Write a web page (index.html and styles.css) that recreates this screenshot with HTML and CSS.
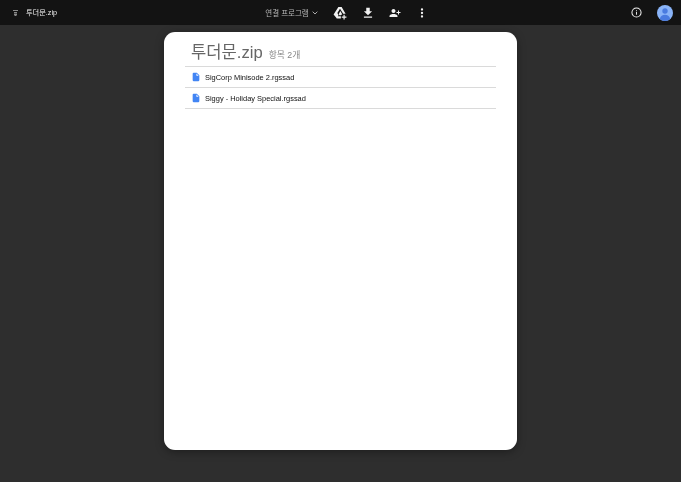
FILE: index.html
```html
<!DOCTYPE html>
<html lang="ko">
<head>
<meta charset="utf-8">
<title>투더문.zip</title>
<link rel="stylesheet" href="styles.css">
</head>
<body>
<header class="topbar">
  <div class="side left">
    <svg class="zipicon" viewBox="0 0 5 6" width="5" height="6"><path d="M0 0h5v1H0zM1 2h3v1H1zM1 3.500h3V5L3 6H2L1 5z" fill="#8a8a8a"/></svg>
    <span class="fname">투더문.zip</span>
  </div>
  <div class="center">
    <div class="openwith"><span>연결 프로그램</span>
      <svg viewBox="0 0 24 24" width="8" height="8"><path d="M5 8l7 7 7-7" fill="none" stroke="#aaa" stroke-width="3"/></svg>
    </div>
    <div class="actions">
      <svg viewBox="0 0 24 24" width="14" height="14"><path d="M9.200 1.500h5.600l6.800 11.800H17.500L12 4.500 7.500 12 9.500 15.500 6.300 21 1 14.500zM12.500 8.500l3.300 5.500-2.500 2H11l-1.200-2zM8 17.500h5.500v4H6z" fill="#f1f1f1"/><path d="M18 15v3h-3v2h3v3h2v-3h3v-2h-3v-3z" fill="#f1f1f1"/></svg>
      <svg viewBox="0 0 24 24" width="14" height="14"><path d="M19 9h-4V3H9v6H5l7 7zM5 18v2h14v-2z" fill="#f1f1f1"/></svg>
      <svg viewBox="0 0 24 24" width="12" height="12"><path d="M15 12c2.200 0 4-1.800 4-4s-1.800-4-4-4-4 1.800-4 4 1.800 4 4 4zM6 10V7H4v3H1v2h3v3h2v-3h3v-2zM15 14c-2.700 0-8 1.300-8 4v2h16v-2c0-2.700-5.300-4-8-4z" fill="#f1f1f1" transform="matrix(-1 0 0 1 24 0)"/></svg>
      <svg viewBox="0 0 24 24" width="14" height="14"><path d="M12 8a2 2 0 100-4 2 2 0 000 4zm0 2a2 2 0 100 4 2 2 0 000-4zm0 6a2 2 0 100 4 2 2 0 000-4z" fill="#f1f1f1"/></svg>
    </div>
  </div>
  <div class="side right">
    <svg viewBox="0 0 24 24" width="11" height="11"><circle cx="12" cy="12" r="10" fill="none" stroke="#f1f1f1" stroke-width="2.200"/><path d="M11 11h2v6h-2zM11 7h2v2h-2z" fill="#f1f1f1"/></svg>
    <svg viewBox="0 0 16 16" width="16" height="16"><circle cx="8" cy="8" r="8" fill="#8ab4f8"/><circle cx="8" cy="6" r="2.700" fill="#4a7be0"/><path d="M2.800 14c.6-2.800 2.800-4.200 5.200-4.200s4.600 1.400 5.200 4.200A8 8 0 018 16a8 8 0 01-5.200-2z" fill="#4a7be0"/></svg>
  </div>
</header>
<main class="stage">
  <section class="sheet">
    <div class="head">
      <h1 class="title">투더문.zip</h1>
      <span class="count">항목 2개</span>
    </div>
    <ul class="files">
      <li class="file">
        <svg viewBox="0 0 24 24" width="10" height="10"><path d="M14 2H6c-1.100 0-2 .9-2 2v16c0 1.100.9 2 2 2h12c1.100 0 2-.9 2-2V8zM13 9V3.500L18.500 9z" fill="#4285f4"/></svg>
        <span>SigCorp Minisode 2.rgssad</span>
      </li>
      <li class="file">
        <svg viewBox="0 0 24 24" width="10" height="10"><path d="M14 2H6c-1.100 0-2 .9-2 2v16c0 1.100.9 2 2 2h12c1.100 0 2-.9 2-2V8zM13 9V3.500L18.500 9z" fill="#4285f4"/></svg>
        <span>Siggy - Holiday Special.rgssad</span>
      </li>
    </ul>
  </section>
</main>
</body>
</html>
```
FILE: styles.css
```css
* { box-sizing: border-box; }
html, body { margin: 0; height: 100%; }
body {
  width: 681px;
  height: 482px;
  overflow: hidden;
  background: #2e2e2e;
  font-family: "Liberation Sans", "Noto Sans CJK KR", sans-serif;
  display: flex;
  flex-direction: column;
}
.topbar {
  height: 25px;
  flex: none;
  background: #131313;
  display: grid;
  grid-template-columns: 1fr auto 1fr;
  align-items: center;
  color: #f1f1f1;
  will-change: transform;
}
.side { display: flex; align-items: center; }
.left { padding-left: 13px; gap: 8px; }
.fname { font-size: 7.2px; line-height: 10px; }
.right { justify-content: flex-end; padding-right: 8px; gap: 15px; }
.center { display: flex; align-items: center; gap: 14px; padding-left: 13px; }
.openwith { display: flex; align-items: center; gap: 2px; font-size: 7.5px; color: #b8b8b8; }
.actions { display: flex; align-items: center; gap: 14px; }
svg { display: block; flex: none; }
.stage { flex: 1; display: flex; justify-content: center; padding-top: 7px; }
.sheet {
  width: 353px;
  height: 418px;
  background: #fff;
  border-radius: 11px;
  box-shadow: 0 2px 8px rgba(0,0,0,.35);
  padding: 8px 21px 0;
  will-change: transform;
}
.head {
  height: 27px;
  border-bottom: 1px solid #dadada;
  display: flex;
  align-items: baseline;
  gap: 6px;
  padding-left: 6px;
}
.title { margin: 0; font-size: 16.6px; line-height: 26px; font-weight: 400; color: #666; }
.count { font-size: 8.8px; color: #858585; }
.files { list-style: none; margin: 0; padding: 0; }
.file {
  height: 21px;
  border-bottom: 1px solid #dadada;
  display: flex;
  align-items: center;
  gap: 4px;
  padding-left: 6px;
  font-size: 7.45px;
  color: #111;
}
```
